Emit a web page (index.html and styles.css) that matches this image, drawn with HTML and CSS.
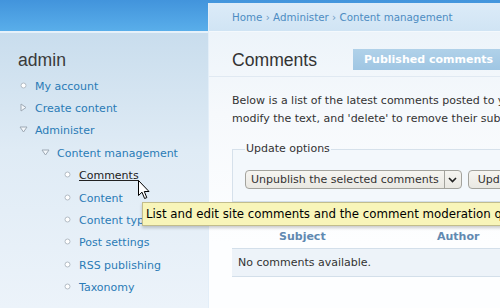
FILE: index.html
```html
<!DOCTYPE html>
<html lang="en">
<head>
<meta charset="UTF-8" />
<meta name="viewport" content="width=device-width, initial-scale=1" />
<title>Comments | Content management</title>
<link rel="stylesheet" href="styles.css">
</head>
<body>
<div class="page">

  <!-- Left sidebar: user menu -->
  <aside class="sidebar">
    <h2 class="block-title">admin</h2>
    <ul class="menu">
      <li>
        <div class="item"><svg class="bullet" viewBox="0 0 9 9"><circle cx="4.5" cy="4.5" r="2.5" fill="#fff" stroke="#b3bcc5"/></svg><a href="#">My account</a></div>
      </li>
      <li>
        <div class="item"><svg class="bullet" viewBox="0 0 9 9"><path d="M2 1 L7 4.5 L2 8 Z" fill="#f3f7fb" stroke="#9ea9b4"/></svg><a href="#">Create content</a></div>
      </li>
      <li>
        <div class="item"><svg class="bullet" viewBox="0 0 9 9"><path d="M1 2 L8 2 L4.5 7 Z" fill="#f3f7fb" stroke="#9ea9b4"/></svg><a href="#">Administer</a></div>
        <ul class="menu">
          <li>
            <div class="item"><svg class="bullet" viewBox="0 0 9 9"><path d="M1 2 L8 2 L4.5 7 Z" fill="#f3f7fb" stroke="#9ea9b4"/></svg><a href="#">Content management</a></div>
            <ul class="menu">
              <li><div class="item"><svg class="bullet" viewBox="0 0 9 9"><circle cx="4.5" cy="4.5" r="2.5" fill="#fff" stroke="#b3bcc5"/></svg><a href="#" class="active">Comments</a></div></li>
              <li><div class="item"><svg class="bullet" viewBox="0 0 9 9"><circle cx="4.5" cy="4.5" r="2.5" fill="#fff" stroke="#b3bcc5"/></svg><a href="#">Content</a></div></li>
              <li><div class="item"><svg class="bullet" viewBox="0 0 9 9"><circle cx="4.5" cy="4.5" r="2.5" fill="#fff" stroke="#b3bcc5"/></svg><a href="#">Content types</a></div></li>
              <li><div class="item"><svg class="bullet" viewBox="0 0 9 9"><circle cx="4.5" cy="4.5" r="2.5" fill="#fff" stroke="#b3bcc5"/></svg><a href="#">Post settings</a></div></li>
              <li><div class="item"><svg class="bullet" viewBox="0 0 9 9"><circle cx="4.5" cy="4.5" r="2.5" fill="#fff" stroke="#b3bcc5"/></svg><a href="#">RSS publishing</a></div></li>
              <li><div class="item"><svg class="bullet" viewBox="0 0 9 9"><circle cx="4.5" cy="4.5" r="2.5" fill="#fff" stroke="#b3bcc5"/></svg><a href="#">Taxonomy</a></div></li>
            </ul>
          </li>
        </ul>
      </li>
    </ul>
  </aside>

  <!-- Main content panel -->
  <main class="panel">
    <div class="breadcrumb">
      <a href="#">Home</a> <span class="sep">›</span> <a href="#">Administer</a> <span class="sep">›</span> <a href="#">Content management</a>
    </div>

    <div class="title-row">
      <h1 class="title">Comments</h1>
      <ul class="tabs">
        <li class="tab active">Published comments</li>
        <li class="tab">Approval queue</li>
      </ul>
    </div>

    <div class="content">
      <p class="help">Below is a list of the latest comments posted to your site. Click on a subject to see the comment, the author's name to edit the author's user information, 'edit' to<br>modify the text, and 'delete' to remove their submission.</p>

      <fieldset class="options">
        <legend>Update options</legend>
        <div class="controls">
          <div class="select">
            <span class="select-text">Unpublish the selected comments</span>
            <span class="select-arrow"><svg width="9" height="6" viewBox="0 0 9 6"><path d="M1 1 L4.5 4.5 L8 1" fill="none" stroke="#222" stroke-width="1.6"/></svg></span>
          </div>
          <button type="button" class="btn">Update</button>
        </div>
      </fieldset>

      <table class="list">
        <thead>
          <tr>
            <th class="col-check"></th>
            <th class="col-subject">Subject</th>
            <th class="col-author">Author</th>
            <th>Time</th>
          </tr>
        </thead>
        <tbody>
          <tr><td colspan="4">No comments available.</td></tr>
        </tbody>
      </table>
    </div>
  </main>

  <!-- hover tooltip + pointer over "Comments" link -->
  <div class="tooltip">List and edit site comments and the comment moderation queue.</div>
  <svg class="cursor" width="13" height="20" viewBox="0 0 13 20"><path d="M0.5 0.5 L0.5 15.5 L4 12.2 L6.6 18.5 L8.8 17.6 L6.3 11.5 L11 11.5 Z" fill="#fff" stroke="#000" stroke-width="1" stroke-linejoin="round"/></svg>
</div>
</body>
</html>
```

FILE: styles.css
```css
/* --- BASE --- */
*, *::before, *::after {
  box-sizing: border-box;
}
body {
  margin: 0;
  overflow: hidden;
  font-family: "DejaVu Sans", Verdana, sans-serif;
  font-size: 11px;
  color: #333;
}
a {
  color: #2a7bb6;
  text-decoration: none;
}

/* --- PAGE: blue header band + sidebar gradient --- */
.page {
  position: relative;
  display: flex;
  width: 1300px;
  min-height: 308px;
  background: linear-gradient(to bottom,
    #4294dc 0, #59aeea 31px,
    #e6f1fa 31px, #e6f1fa 33px,
    #c9dded 33px, #dfebf5 150px, #ecf3fa 308px);
}

/* --- SIDEBAR --- */
.sidebar {
  flex: none;
  width: 208px;
  padding-top: 49px;
}
.block-title {
  margin: 0 0 4px 18px;
  font: normal 17.6px/22px "Liberation Sans", Arial, sans-serif;
  color: #3a3a3a;
}
.menu {
  list-style: none;
  margin: 0;
  padding: 0 0 0 19px;
}
.menu .menu {
  padding-left: 22px;
}
.item {
  display: flex;
  align-items: center;
  height: 22.4px;
}
.bullet {
  flex: none;
  width: 9px;
  height: 9px;
  margin: 0 7px 2px 0;
}
.item a.active {
  color: #222;
  text-decoration: underline;
}

/* --- MAIN PANEL --- */
.panel {
  flex: none;
  width: 1092px;
  margin-top: 3px;
  border-left: 1px solid #e3eef8;
  background: linear-gradient(to bottom, #edf4fa 30px, #f6f9fc 110px, #fdfeff 240px);
}
.breadcrumb {
  height: 29px;
  line-height: 29px;
  padding-left: 23px;
  font-size: 10.3px;
  border-bottom: 1px solid #f4f9fd;
  background: linear-gradient(to bottom, #dcebf8, #d0e4f4);
}
.breadcrumb a {
  color: #4d8cc2;
}
.breadcrumb .sep {
  color: #6f9cc4;
}

/* --- TITLE + TABS --- */
.title-row {
  display: flex;
  align-items: flex-end;
  gap: 36px;
  height: 45px;
  padding: 0 0 6px 23px;
  border-bottom: 1px solid #e0e9f2;
}
.title {
  margin: 0 0 -1px;
  font: normal 17.6px/22px "Liberation Sans", Arial, sans-serif;
  color: #333;
}
.tabs {
  display: flex;
  list-style: none;
  margin: 0;
  padding: 0;
}
.tab {
  height: 21px;
  line-height: 21px;
  padding: 0 11px;
  font-weight: bold;
  color: #fff;
  background: linear-gradient(to bottom, #b0d1e9, #9fc6e3);
}

/* --- CONTENT --- */
.content {
  padding-left: 23px;
}
.help {
  margin: 15px 0 0;
  line-height: 18px;
  white-space: nowrap;
  color: #333;
}
.options {
  margin: 13px 0 0;
  padding: 13px 12px 12px;
  border: 1px solid #d6e1eb;
  background: #f3f8fc;
  width: 700px;
}
.options legend {
  padding: 0 1px;
  line-height: 16px;
  color: #333;
}
.controls {
  display: flex;
  gap: 6px;
}
.select {
  display: flex;
  height: 19px;
  border: 1px solid #a3a39d;
  border-radius: 4px;
  background: linear-gradient(to bottom, #f6f5f1, #e9e8e2);
}
.select-text {
  padding: 0 5px;
  line-height: 17px;
  color: #333;
}
.select-arrow {
  display: flex;
  align-items: center;
  justify-content: center;
  width: 17px;
  border-left: 1px solid #a3a39d;
}
.btn {
  height: 19px;
  padding: 0 9px;
  font: 11px/17px "DejaVu Sans", Verdana, sans-serif;
  color: #333;
  border: 1px solid #a3a39d;
  border-radius: 4px;
  background: linear-gradient(to bottom, #f6f5f1, #e9e8e2);
}

/* --- COMMENTS TABLE --- */
.list {
  margin-top: 24px;
  width: 700px;
  border-collapse: collapse;
}
.list th {
  height: 22px;
  padding: 0 7px;
  text-align: left;
  font-weight: bold;
  color: #6189b1;
}
.list .col-check {
  width: 40px;
  padding: 0;
}
.list .col-subject {
  width: 158px;
}
.list td {
  height: 28px;
  padding: 1px 6px 0;
  background: #edf3f9;
  border-top: 1px solid #d3dfea;
  border-bottom: 1px solid #d3dfea;
  color: #333;
}

/* --- OVERLAYS: tooltip and mouse pointer --- */
.tooltip {
  position: absolute;
  left: 142px;
  top: 202px;
  height: 24px;
  padding: 0 3px;
  line-height: 22px;
  font-size: 11.8px;
  color: #000;
  white-space: nowrap;
  background: #f8f5b9;
  border: 1px solid #c2bd8c;
  box-shadow: 0 2px 3px rgba(0, 0, 0, 0.2);
}
.cursor {
  position: absolute;
  left: 138px;
  top: 180px;
}
```
